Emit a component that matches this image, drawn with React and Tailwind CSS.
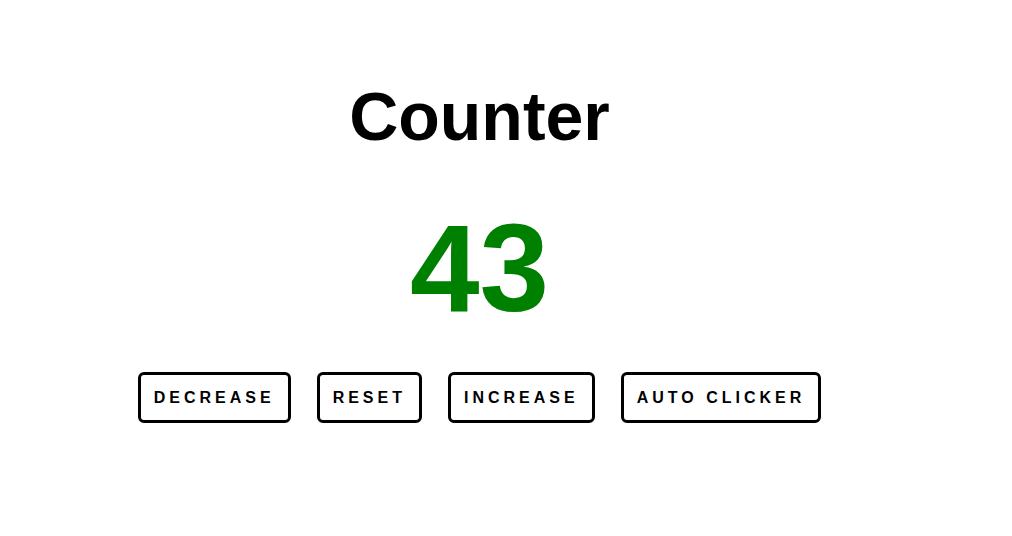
export default function App() {
  const buttons = ["Decrease", "Reset", "Increase", "Auto Clicker"];

  return (
    <div
      className="w-full h-[536px] bg-white flex flex-col items-center pr-[53px] text-black"
      style={{ fontFamily: '"Liberation Sans", Arial, sans-serif' }}
    >
      {/* Title */}
      <h1 className="mt-[82px] text-[68px] leading-none font-bold">Counter</h1>

      {/* Count */}
      <div className="mt-[55px] text-[125px] leading-none font-bold text-[#008000]">
        43
      </div>

      {/* Controls */}
      <div className="mt-[42px] flex gap-[26px]">
        {buttons.map((label) => (
          <button
            key={label}
            type="button"
            className="border-[3px] border-black rounded-md bg-white px-[13px] py-[13px] text-[16px] leading-[19px] font-bold uppercase tracking-[4px] cursor-pointer"
          >
            {label}
          </button>
        ))}
      </div>
    </div>
  );
}
